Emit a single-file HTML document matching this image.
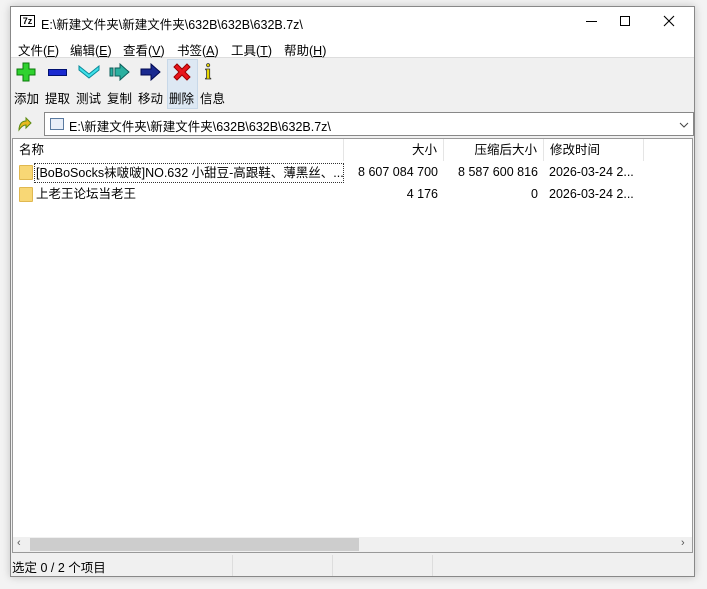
<!DOCTYPE html><html><head><meta charset="utf-8"><style>
*{margin:0;padding:0;box-sizing:border-box}
body{width:707px;height:589px;background:#f3f3f3;font-family:"Liberation Sans","Noto Sans CJK SC",sans-serif;font-size:12.5px;color:#000;position:relative;overflow:hidden}
.win{position:absolute;left:10px;top:6px;width:685px;height:571px;background:#f0f0f0;border:1px solid #888;box-shadow:0 0 8px rgba(0,0,0,.2)}
.a{position:absolute;white-space:nowrap}
.title{left:0;top:0;width:683px;height:30px;background:#fff}
.menu{left:0;top:30px;width:683px;height:21px;background:#fff;border-bottom:1px solid #ddd}
.menu span{position:absolute;top:3px}
.tb span.l{position:absolute;top:81px}
.list{left:1px;top:131px;width:681px;height:415px;background:#fff;border:1px solid #999}
.hd{position:absolute;top:0;height:22px;line-height:22px;border-right:1px solid #e5e5e5;padding:0 6px}
.r{text-align:right}
.row{position:absolute;height:20px;line-height:20px}
.fold{position:absolute;width:14px;height:15px;background:#f8d775;border:1px solid #e0b850;border-radius:1px}
</style></head><body>
<div class="win">
<div class="a title">
 <div class="a" style="left:9px;top:8px;width:15px;height:12px;border:1px solid #000;background:#fff;font-size:9px;font-weight:bold;line-height:10px;text-align:center">7z</div>
 <div class="a" style="left:30px;top:7px">E:\新建文件夹\新建文件夹\632B\632B\632B.7z\</div>
 <div class="a" style="left:575px;top:14px;width:11px;height:1px;background:#000"></div>
 <div class="a" style="left:609px;top:9px;width:10px;height:10px;border:1px solid #000"></div>
 <svg class="a" style="left:652px;top:8px" width="12" height="12"><path d="M1 1L11 11M11 1L1 11" stroke="#000" stroke-width="1.1"/></svg>
</div>
<div class="a menu">
 <span style="left:7px">文件(<u>F</u>)</span><span style="left:59px">编辑(<u>E</u>)</span><span style="left:112px">查看(<u>V</u>)</span><span style="left:166px">书签(<u>A</u>)</span><span style="left:220px">工具(<u>T</u>)</span><span style="left:273px">帮助(<u>H</u>)</span>
</div>
<div class="tb">
 <svg class="a" style="left:5px;top:55px" width="20" height="20"><path d="M7 1h6v6h6v6h-6v6H7v-6H1V7h6z" fill="#2fd22f" stroke="#0a7a0a"/></svg>
 <div class="a" style="left:37px;top:62px;width:19px;height:7px;background:#1a2ad0;border:1px solid #001070"></div>
 <svg class="a" style="left:67px;top:58px" width="22" height="14"><path d="M1 1l10 8 10-8v4l-10 8L1 5z" fill="#3ee0e8" stroke="#0a8a9a"/></svg>
 <svg class="a" style="left:98px;top:56px" width="22" height="18"><path d="M1 5h3v8H1zM6 5h5V1l9 8-9 8v-4H6z" fill="#2ab0a0" stroke="#0b5b58"/></svg>
 <svg class="a" style="left:129px;top:56px" width="22" height="18"><path d="M1 6h10V1l9 8-9 8v-5H1z" fill="#1a2a90" stroke="#000850"/></svg>
 <div class="a" style="left:156px;top:52px;width:31px;height:50px;background:#dde8f3;border:1px solid #c8d8e8"></div>
 <svg class="a" style="left:161px;top:55px" width="20" height="20"><path d="M2 5l3-3 5 5 5-5 3 3-5 5 5 5-3 3-5-5-5 5-3-3 5-5z" fill="#e8141c" stroke="#900"/></svg>
 <div class="a" style="left:194px;top:52px;font-family:'Liberation Serif',serif;font-weight:bold;font-size:22px;color:#e8d800;-webkit-text-stroke:.8px #333">i</div>
 <span class="l" style="left:3px">添加</span><span class="l" style="left:34px">提取</span><span class="l" style="left:65px">测试</span><span class="l" style="left:96px">复制</span><span class="l" style="left:127px">移动</span><span class="l" style="left:158px">删除</span><span class="l" style="left:189px">信息</span>
</div>
<svg class="a" style="left:5px;top:108px" width="16" height="18"><path d="M3 15c0-6 3-9 7-9V3l5 5-5 5v-3c-3 0-5 2-7 5z" fill="#e8b820" stroke="#5a8a10"/></svg>
<div class="a" style="left:33px;top:105px;width:650px;height:24px;background:#fff;border:1px solid #888">
 <div class="a" style="left:5px;top:5px;width:14px;height:12px;border:1px solid #5a7aa0;background:#e8eef8"></div>
 <div class="a" style="left:24px;top:3px">E:\新建文件夹\新建文件夹\632B\632B\632B.7z\</div>
 <svg class="a" style="left:634px;top:9px" width="10" height="6"><path d="M1 1l4 4 4-4" stroke="#444" fill="none"/></svg>
</div>
<div class="a list">
 <div class="hd" style="left:0;width:331px">名称</div>
 <div class="hd r" style="left:331px;width:100px">大小</div>
 <div class="hd r" style="left:431px;width:100px">压缩后大小</div>
 <div class="hd" style="left:531px;width:100px">修改时间</div>
 <div class="fold" style="left:6px;top:26px"></div>
 <div class="row" style="left:21px;top:24px;width:310px;border:1px dotted #333;padding-left:1px;line-height:18px">[BoBoSocks袜啵啵]NO.632 小甜豆-高跟鞋、薄黑丝、...</div>
 <div class="row r" style="left:331px;top:23px;width:94px">8 607 084 700</div>
 <div class="row r" style="left:431px;top:23px;width:94px">8 587 600 816</div>
 <div class="row" style="left:536px;top:23px">2026-03-24 2...</div>
 <div class="fold" style="left:6px;top:48px"></div>
 <div class="row" style="left:23px;top:45px">上老王论坛当老王</div>
 <div class="row r" style="left:331px;top:45px;width:94px">4 176</div>
 <div class="row r" style="left:431px;top:45px;width:94px">0</div>
 <div class="row" style="left:536px;top:45px">2026-03-24 2...</div>
 <div class="a" style="left:0;top:398px;width:679px;height:15px;background:#f0f0f0">
  <div class="a" style="left:4px;top:0;font-size:11px;color:#555">‹</div>
  <div class="a" style="left:17px;top:1px;width:329px;height:13px;background:#cdcdcd"></div>
  <div class="a" style="left:668px;top:0;font-size:11px;color:#555">›</div>
 </div>
</div>
<div class="a" style="left:1px;top:550px">选定 0 / 2 个项目</div>
<div class="a" style="left:221px;top:548px;width:1px;height:21px;background:#ddd"></div>
<div class="a" style="left:321px;top:548px;width:1px;height:21px;background:#ddd"></div>
<div class="a" style="left:421px;top:548px;width:1px;height:21px;background:#ddd"></div>
</div>
</body></html>
